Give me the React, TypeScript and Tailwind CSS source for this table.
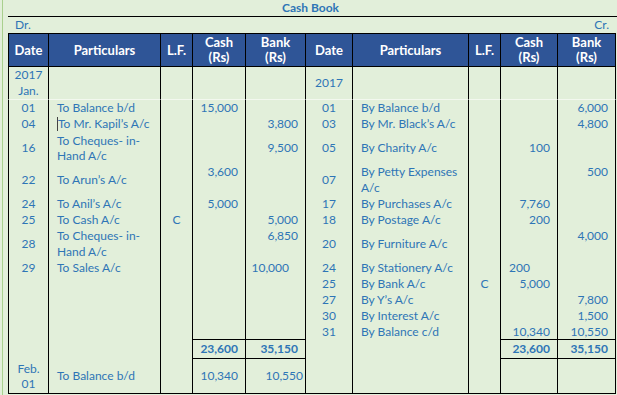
import React from 'react';

type Side = {
  date?: React.ReactNode;
  part?: React.ReactNode;
  lf?: React.ReactNode;
  cash?: React.ReactNode;
  bank?: React.ReactNode;
  cashTop?: boolean;
  bankTop?: boolean;
  cashLeft?: boolean;
  bankPad?: string;
};

type Row = { left: Side; right: Side; total?: boolean; first?: boolean };

const rows: Row[] = [
  { first: true, left: { date: <>2017<br />Jan.</> }, right: { date: '2017' } },
  {
    left: { date: '01', part: 'To Balance b/d', cash: '15,000' },
    right: { date: '01', part: 'By Balance b/d', bank: '6,000' },
  },
  {
    left: {
      date: '04',
      part: (
        <>
          <span className="inline-block w-px h-[14px] bg-[#444] align-middle" />
          To Mr. Kapil’s A/c
        </>
      ),
      bank: '3,800',
    },
    right: { date: '03', part: 'By Mr. Black’s A/c', bank: '4,800' },
  },
  {
    left: { date: '16', part: <span className="leading-[15px]">To Cheques- in-<br />Hand A/c</span>, bank: '9,500' },
    right: { date: '05', part: 'By Charity A/c', cash: '100' },
  },
  {
    left: { date: '22', part: 'To Arun’s A/c', cash: '3,600', cashTop: true },
    right: { date: '07', part: <>By Petty Expenses<br />A/c</>, bank: '500', bankTop: true },
  },
  {
    left: { date: '24', part: 'To Anil’s A/c', cash: '5,000' },
    right: { date: '17', part: 'By Purchases A/c', cash: '7,760' },
  },
  {
    left: { date: '25', part: 'To Cash A/c', lf: 'C', bank: '5,000' },
    right: { date: '18', part: 'By Postage A/c', cash: '200' },
  },
  {
    left: { date: '28', part: <>To Cheques- in-<br />Hand A/c</>, bank: '6,850', bankTop: true },
    right: { date: '20', part: 'By Furniture A/c', bank: '4,000', bankTop: true },
  },
  {
    left: { date: '29', part: 'To Sales A/c', bank: '10,000', bankPad: 'pr-[16px]' },
    right: { date: '24', part: 'By Stationery A/c', cash: '200', cashLeft: true },
  },
  { left: {}, right: { date: '25', part: 'By Bank A/c', lf: 'C', cash: '5,000' } },
  { left: {}, right: { date: '27', part: 'By Y’s A/c', bank: '7,800' } },
  { left: {}, right: { date: '30', part: 'By Interest A/c', bank: '1,500' } },
  { left: {}, right: { date: '31', part: 'By Balance c/d', cash: '10,340', bank: '10,550' } },
  { total: true, left: { cash: '23,600', bank: '35,150' }, right: { cash: '23,600', bank: '35,150' } },
  {
    left: {
      date: <span className="leading-[15px]">Feb.<br />01</span>,
      part: 'To Balance b/d',
      cash: '10,340',
      bank: '10,550',
      bankPad: 'pr-[2px]',
    },
    right: {},
  },
];

const cell = 'flex border-l border-black leading-[16px] text-[#2e75b6] whitespace-nowrap';

function Half({ s, row, end }: { s: Side; row: Row; end?: boolean }) {
  const edge = row.first ? 'border-b border-b-[#f3f8ef]' : '';
  const sum = row.total ? 'border-y font-bold' : '';
  return (
    <>
      <div className={`${cell} ${edge} items-center justify-center text-center`}>{s.date}</div>
      <div className={`${cell} ${edge} items-center pl-[8px]`}>{s.part}</div>
      <div className={`${cell} ${edge} items-center justify-center`}>{s.lf}</div>
      <div
        className={`${cell} ${edge} ${sum} ${s.cashLeft ? 'justify-start pl-[8px]' : 'justify-end pr-[7px]'} ${
          s.cashTop ? 'items-start leading-[14px]' : 'items-center'
        }`}
      >
        {s.cash}
      </div>
      <div
        className={`${cell} ${edge} ${sum} justify-end ${s.bankPad ?? 'pr-[7px]'} ${
          s.bankTop ? 'items-start leading-[14px]' : 'items-center'
        } ${end ? 'border-r' : ''}`}
      >
        {s.bank}
      </div>
    </>
  );
}

const th =
  'flex items-center justify-center text-center border-l border-y border-black bg-[#2f5597] text-white font-bold text-[13px] leading-[15px]';

function HeaderHalf({ end }: { end?: boolean }) {
  return (
    <>
      <div className={th}>Date</div>
      <div className={th}>Particulars</div>
      <div className={th}>L.F.</div>
      <div className={th}>Cash<br />(Rs)</div>
      <div className={`${th} ${end ? 'border-r' : ''}`}>Bank<br />(Rs)</div>
    </>
  );
}

export default function App() {
  return (
    <div className="w-[617px] h-[395px] overflow-hidden bg-[#e2efda] pl-[2px] font-['Lato','Liberation_Sans',sans-serif] text-[12px]">
      <div className="h-full border-l border-[#a9d08e] pl-[5px]">
        {/* Title */}
        <div className="h-[17px] border-b border-black text-center font-bold text-[#2e75b6] leading-[16px] pr-[4px]">
          Cash Book
        </div>
        <div className="h-[16px] flex justify-between items-center text-[#2e75b6] pl-[7px] pr-[8px] leading-[16px]">
          <span>Dr.</span>
          <span>Cr.</span>
        </div>

        {/* Ledger */}
        <div className="grid w-[608px] border-b border-black grid-cols-[40px_112px_32px_53px_60px_47px_116px_32px_57px_59px] grid-rows-[34px_33px_16px_16px_32px_32px_16px_16px_32px_16px_16px_16px_16px_15px_20px_34px]">
          <HeaderHalf />
          <HeaderHalf end />
          {rows.map((r, i) => (
            <React.Fragment key={i}>
              <Half s={r.left} row={r} />
              <Half s={r.right} row={r} end />
            </React.Fragment>
          ))}
        </div>
      </div>
    </div>
  );
}
